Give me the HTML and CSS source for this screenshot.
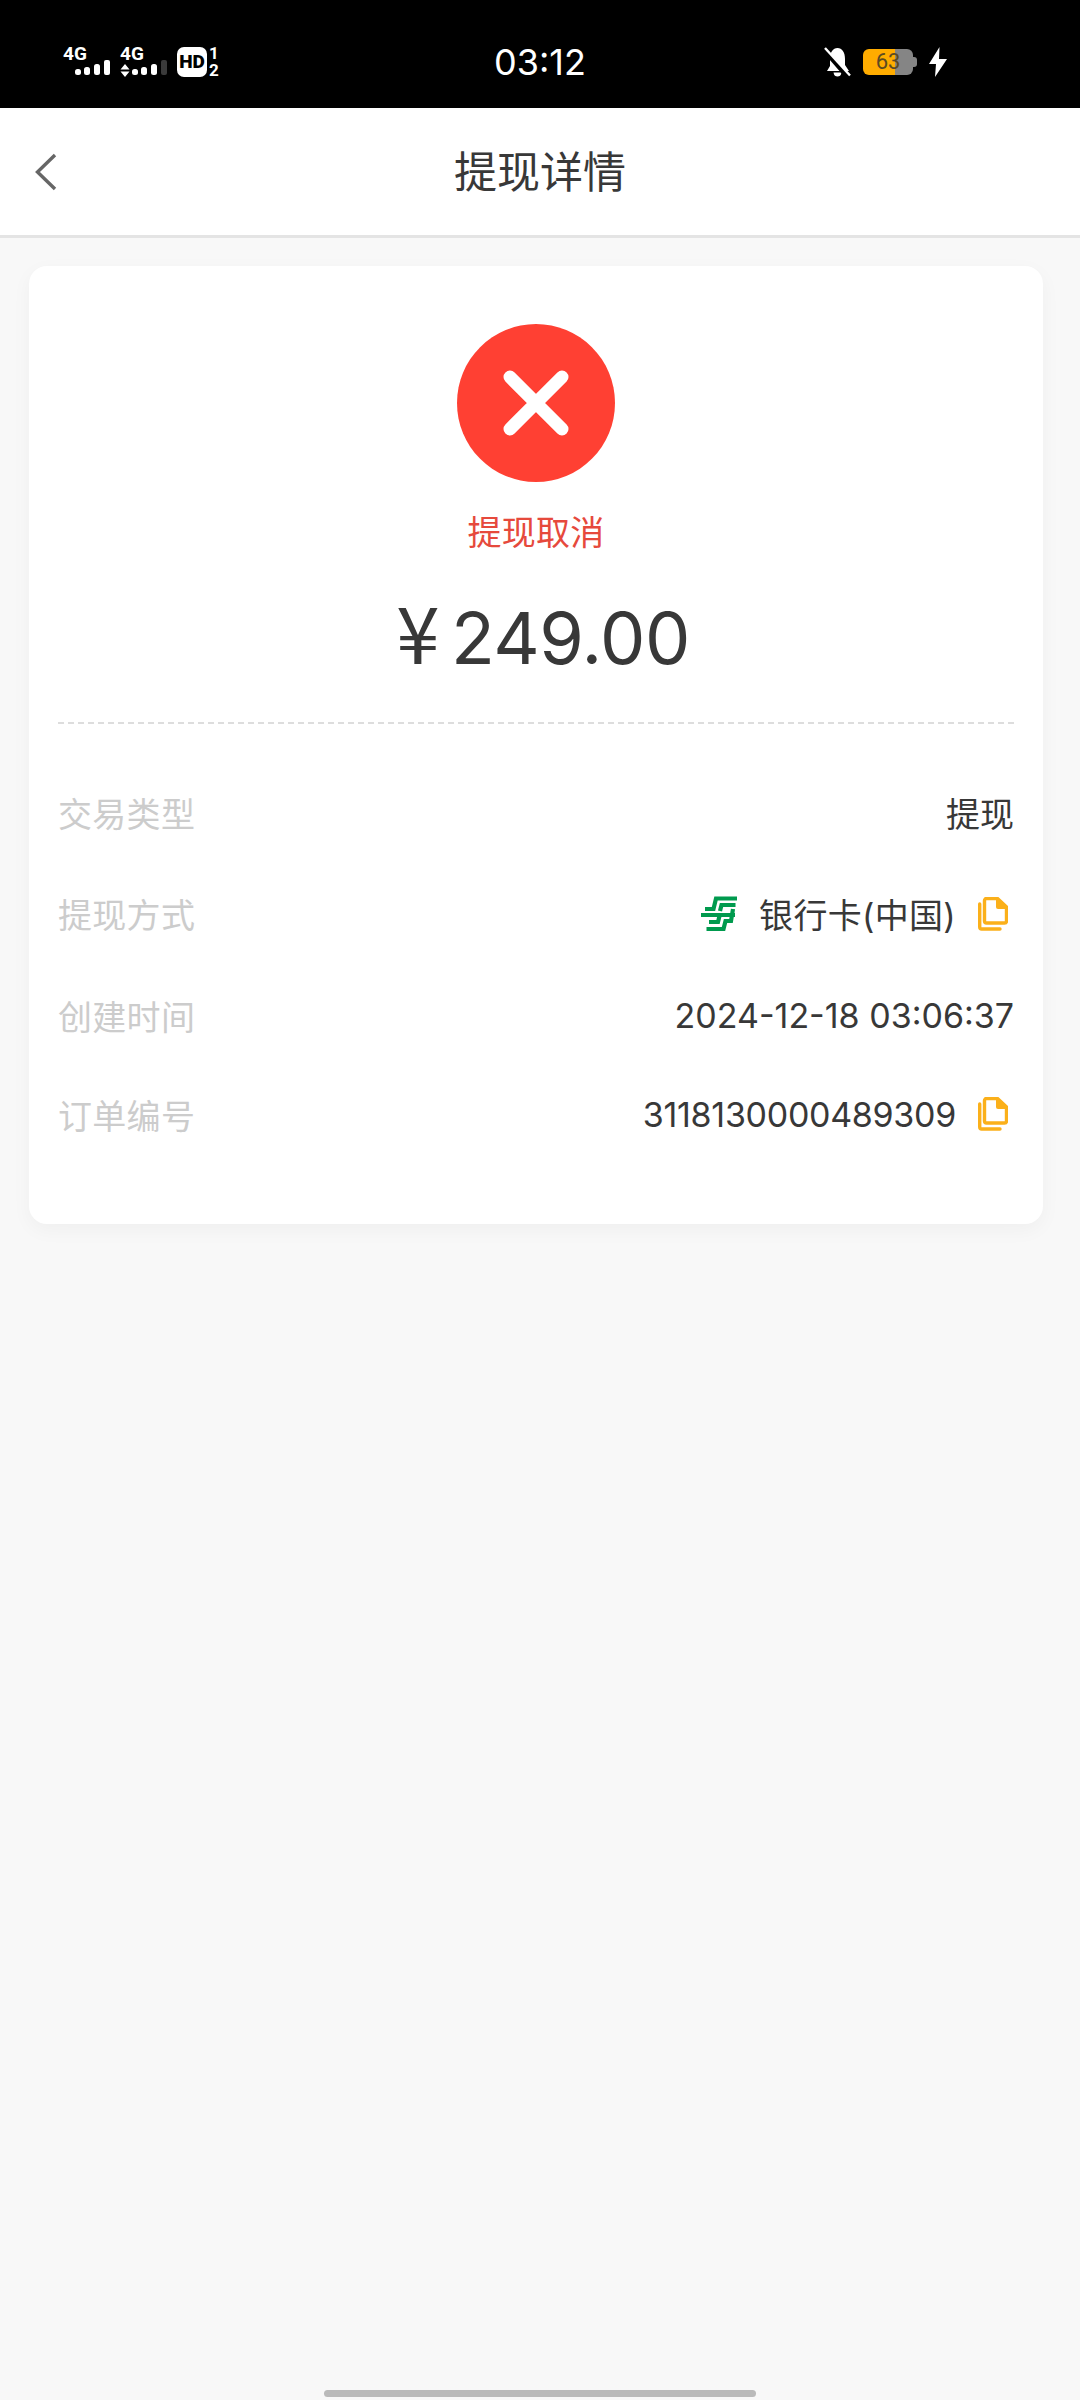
FILE: index.html
```html
<!DOCTYPE html>
<html lang="zh-CN">
<head>
    <meta charset="UTF-8">
    <meta name="viewport" content="width=device-width, initial-scale=1.0">
    <title>提现详情</title>
    <link rel="stylesheet" href="styles.css">
</head>
<body>
    <div id="main">
        <div class="statusBar">
            <div class="statusLeft">
                <div class="signal">
                    <span class="netText">4G</span>
                    <svg class="signalBars" width="47" height="17" viewBox="0 0 47 17">
                        <rect x="12" y="9" width="6" height="6" rx="2.5" fill="#fff"/>
                        <rect x="21" y="7" width="6" height="8" rx="2.5" fill="#fff"/>
                        <rect x="31" y="4" width="6" height="11" rx="2.5" fill="#fff"/>
                        <rect x="41" y="0" width="6" height="15" rx="2" fill="#fff"/>
                    </svg>
                </div>
                <div class="signal">
                    <span class="netText">4G</span>
                    <svg class="signalBars" width="47" height="17" viewBox="0 0 47 17">
                        <path d="M0.500 9.500 L5 4 L9.500 9.500 Z M0.500 11.500 L5 17 L9.500 11.500 Z" fill="#fff"/>
                        <rect x="12" y="9" width="6" height="6" rx="2.500" fill="#fff"/>
                        <rect x="21" y="7" width="6" height="8" rx="2.500" fill="#fff"/>
                        <rect x="31" y="4" width="6" height="11" rx="2.500" fill="#fff"/>
                        <rect x="41" y="0" width="6" height="15" rx="2" fill="#3a3a3a"/>
                    </svg>
                </div>
                <div class="hdBadge">HD</div>
                <div class="simSlots"><span>1</span><span>2</span></div>
            </div>
            <div class="clock">03:12</div>
            <div class="statusRight">
                <svg width="27" height="30" viewBox="0 0 27 30">
                    <path d="M6 12 C6 5 9 1 13.500 1 C18 1 21 5 21 12 V18 L25 24 H3 L6 19 Z" fill="#fff"/>
                    <path d="M9.500 25.500 H17.500 C17 28.500 15.500 29.500 13.500 29.500 C11.500 29.500 10 28.500 9.500 25.500 Z" fill="#fff"/>
                    <path d="M0 2.500 L24 30" stroke="#000" stroke-width="5"/>
                    <path d="M1 1 L26 28.500" stroke="#fff" stroke-width="2.400"/>
                </svg>
                <div class="battery">63</div>
                <svg class="bolt" width="18" height="30" viewBox="0 0 18 30">
                    <path d="M10.500 0 L0 17 H7 L6 30 L18 12 H10 Z" fill="#fff"/>
                </svg>
            </div>
        </div>

        <div class="navBar">
            <svg class="backIcon" width="24" height="38" viewBox="0 0 24 38">
                <path d="M21 2 L3.500 19 L21 36" fill="none" stroke="#666" stroke-width="3.400"/>
            </svg>
            <h1 class="navTitle">提现详情</h1>
        </div>

        <div class="card">
            <div class="result">
                <svg class="failIcon" width="158" height="158" viewBox="0 0 158 158">
                    <circle cx="79" cy="79" r="79" fill="#ff4033"/>
                    <path d="M53 53 L105 105 M105 53 L53 105" stroke="#fff" stroke-width="13" stroke-linecap="round"/>
                </svg>
                <div class="resultText">提现取消</div>
                <div class="amount"><span class="yen">¥</span>249.00</div>
            </div>

            <div class="rows">
                <div class="row rowType">
                    <span class="label">交易类型</span>
                    <span class="value">提现</span>
                </div>
                <div class="row rowMethod">
                    <span class="label">提现方式</span>
                    <div class="value">
                        <svg class="bankLogo" width="36" height="35" viewBox="0 0 36 35">
                            <g fill="none" stroke="#009a4e" stroke-width="4.200">
                                <path d="M36 2.500 H15 L12.500 13 H4"/>
                                <path d="M34.500 9 H20.500 L19 15"/>
                                <path d="M0 19 H34"/>
                                <path d="M8 26 H17 L18.500 20"/>
                                <path d="M32 13 L30 25 H24.500 L22.500 33 H5.500"/>
                            </g>
                        </svg>
                        <span class="methodName">银行卡(中国)</span>
                        <svg class="copyIcon" width="30" height="34" viewBox="0 0 30 34">
                            <path d="M8.500 1.500 H19.500 L28.500 10 V24 A2 2 0 0 1 26.500 26 H8.500 A2 2 0 0 1 6.500 24 V3.500 A2 2 0 0 1 8.500 1.500 Z" fill="none" stroke="#fbb01a" stroke-width="3.400"/>
                            <path d="M18 1 H20 L29 9.500 V12 H20 A2 2 0 0 1 18 10 Z" fill="#fbb01a"/>
                            <path d="M1.700 7 V30 A2 2 0 0 0 3.700 32 H22" fill="none" stroke="#fbb01a" stroke-width="3.400" stroke-linecap="round"/>
                        </svg>
                    </div>
                </div>
                <div class="row rowTime">
                    <span class="label">创建时间</span>
                    <span class="value">2024-12-18 03:06:37</span>
                </div>
                <div class="row rowOrder">
                    <span class="label">订单编号</span>
                    <div class="value">
                        <span class="orderNo">3118130000489309</span>
                        <svg class="copyIcon" width="30" height="34" viewBox="0 0 30 34">
                            <path d="M8.500 1.500 H19.500 L28.500 10 V24 A2 2 0 0 1 26.500 26 H8.500 A2 2 0 0 1 6.500 24 V3.500 A2 2 0 0 1 8.500 1.500 Z" fill="none" stroke="#fbb01a" stroke-width="3.400"/>
                            <path d="M18 1 H20 L29 9.500 V12 H20 A2 2 0 0 1 18 10 Z" fill="#fbb01a"/>
                            <path d="M1.700 7 V30 A2 2 0 0 0 3.700 32 H22" fill="none" stroke="#fbb01a" stroke-width="3.400" stroke-linecap="round"/>
                        </svg>
                    </div>
                </div>
            </div>
        </div>

        <div class="homeBar"></div>
    </div>
</body>
</html>
```
FILE: styles.css
```css
* {
    margin: 0;
    padding: 0;
    box-sizing: border-box;
}
html, body {
    width: 100%;
    height: 100%;
    overflow: hidden;
}
body {
    font-family: Inter, "Noto Sans CJK SC", sans-serif;
    background-color: #f8f8f8;
    color: #383838;
}
#main {
    width: 1080px;
    height: 2400px;
    display: flex;
    flex-direction: column;
}
.statusBar {
    height: 108px;
    flex-shrink: 0;
    background-color: #000;
    color: #fff;
    display: grid;
    grid-template-columns: 1fr auto 1fr;
    align-items: center;
    padding: 16px 63px 0;
}
.statusLeft {
    display: flex;
    align-items: center;
}
.signal {
    width: 47px;
    margin-right: 10px;
    display: flex;
    flex-direction: column;
}
.netText {
    font-family: Roboto, sans-serif;
    font-size: 19px;
    line-height: 13px;
    font-weight: 700;
}
.signalBars {
    display: block;
}
.hdBadge {
    width: 30px;
    height: 30px;
    background-color: #fff;
    color: #000;
    border-radius: 7px;
    font-family: Roboto, sans-serif;
    font-size: 19px;
    line-height: 30px;
    font-weight: 900;
    text-align: center;
}
.simSlots {
    margin-left: 2px;
    display: flex;
    flex-direction: column;
    font-family: Roboto, sans-serif;
    font-size: 17px;
    line-height: 17px;
    font-weight: 700;
    text-align: center;
}
.clock {
    font-size: 36px;
    line-height: 44px;
}
.statusRight {
    display: flex;
    align-items: center;
    justify-content: flex-end;
    gap: 12px;
    padding-right: 70px;
}
.battery {
    position: relative;
    width: 50px;
    height: 26px;
    margin-right: 4px;
    border-radius: 6px;
    background: linear-gradient(to right, #ffac00 0, #ffac00 32px, #858585 32px);
    color: #5c4a22;
    font-family: Roboto, sans-serif;
    font-size: 22px;
    line-height: 26px;
    text-align: center;
}
.battery::after {
    content: "";
    position: absolute;
    right: -4px;
    top: 8px;
    width: 4px;
    height: 10px;
    border-radius: 0 3px 3px 0;
    background-color: #858585;
}
.navBar {
    position: relative;
    height: 130px;
    flex-shrink: 0;
    background-color: #fff;
    border-bottom: 3px solid #e4e4e4;
    display: flex;
    align-items: center;
    justify-content: center;
}
.backIcon {
    position: absolute;
    left: 34px;
    top: 45px;
}
.navTitle {
    font-size: 43px;
    line-height: 60px;
    font-weight: 400;
}
.card {
    width: 1014px;
    height: 958px;
    margin: 28px 0 0 29px;
    padding: 58px 29px 0;
    background-color: #fff;
    border-radius: 18px;
    box-shadow: 0 6px 20px rgba(0, 0, 0, 0.04);
}
.result {
    display: flex;
    flex-direction: column;
    align-items: center;
    padding-bottom: 34px;
    border-bottom: 2px dashed #ddd;
}
.resultText {
    margin-top: 27px;
    font-size: 34px;
    letter-spacing: 0.3px;
    line-height: 48px;
    color: #e6493c;
}
.amount {
    height: 100px;
    margin: 31px 0 0 14px;
    font-size: 72px;
    letter-spacing: -0.5px;
    line-height: 100px;
}
.yen {
    font-family: "Noto Sans CJK SC", sans-serif;
    font-size: 78px;
    line-height: 1;
    margin-right: 12px;
}
.rows {
    padding-top: 38px;
}
.row {
    display: flex;
    align-items: center;
    justify-content: space-between;
    height: 101px;
    font-size: 34px;
}
.rowTime {
    height: 102px;
}
.rowOrder {
    height: 96px;
}
.label {
    color: #ccc;
    letter-spacing: 0.3px;
}
.value {
    display: flex;
    align-items: center;
}
.bankLogo {
    margin-right: 22px;
}
.methodName {
    letter-spacing: 0.3px;
}
.orderNo {
    letter-spacing: -0.3px;
}
.copyIcon {
    margin-left: 22px;
    margin-right: 6px;
}
.homeBar {
    width: 432px;
    height: 7px;
    margin: auto auto 3px;
    border-radius: 4px;
    background-color: #bababa;
}
```
